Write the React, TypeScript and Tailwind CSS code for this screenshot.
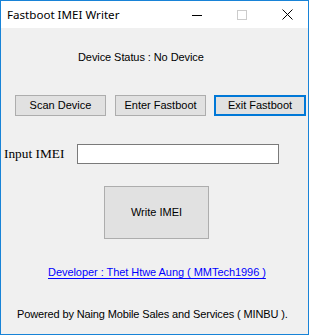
import React from "react";

const sans = { fontFamily: '"Liberation Sans", Arial, sans-serif' };

export default function App() {
  return (
    <div className="w-[310px] h-[336px] bg-white">
      <div className="w-[309px] h-[335px] border border-[#1883d7] flex flex-col bg-[#f0f0f0]">
        <div className="h-[27px] bg-white flex items-center shrink-0">
          <span
            className="ml-[6px] text-[11.6px] leading-[16px] text-black"
            style={{ fontFamily: '"Noto Sans", "Open Sans", sans-serif' }}
          >
            Fastboot IMEI Writer
          </span>
          <div className="ml-auto flex items-center">
            <svg width="10" height="10" viewBox="0 0 10 10" className="block">
              <line x1="0" y1="5.5" x2="10" y2="5.5" stroke="#000" strokeWidth="1" />
            </svg>
            <svg width="10" height="10" viewBox="0 0 10 10" className="block ml-[35px]">
              <rect x="0.5" y="0.5" width="9" height="9" fill="none" stroke="#cccccc" strokeWidth="1" />
            </svg>
            <svg width="11" height="11" viewBox="0 0 11 11" className="block ml-[35px] mr-[15px]">
              <path d="M0.5 0.5 L10.5 10.5 M10.5 0.5 L0.5 10.5" stroke="#000" strokeWidth="1" fill="none" />
            </svg>
          </div>
        </div>
        <div className="flex-1 flex flex-col text-black" style={sans}>
          <div className="mt-[23px] pl-[77px] text-[11px] leading-[13px] tracking-[-0.08px]">Device Status : No Device</div>
          <div className="mt-[31px] ml-[14px] flex items-center text-[11px]">
            <button className="w-[91px] h-[21px] bg-[#e1e1e1] border border-[#adadad] leading-[13px]" style={sans}>
              Scan Device
            </button>
            <button className="ml-[9px] w-[91px] h-[21px] bg-[#e1e1e1] border border-[#adadad] leading-[13px]" style={sans}>
              Enter Fastboot
            </button>
            <button className="ml-[8px] w-[92px] h-[21px] bg-[#e1e1e1] border-2 border-[#0078d7] leading-[13px]" style={sans}>
              Exit Fastboot
            </button>
          </div>
          <div className="mt-[28px] flex items-center">
            <span
              className="ml-[3px] text-[13.33px] leading-[16px] w-[73px]"
              style={{ fontFamily: '"Liberation Serif", "Times New Roman", serif' }}
            >
              Input IMEI
            </span>
            <div className="w-[202px] h-[20px] bg-white border border-[#7a7a7a]" />
          </div>
          <div className="mt-[22px] ml-[103px] w-[105px] h-[53px] bg-[#e1e1e1] border border-[#adadad] flex items-center justify-center text-[11px] leading-[13px]">
            Write IMEI
          </div>
          <div className="mt-[27px] pl-[47px] text-[11px] leading-[13px] tracking-[-0.05px]">
            <span className="text-[#0000ff] underline underline-offset-[2px]">Developer : Thet Htwe Aung ( MMTech1996 )</span>
          </div>
          <div className="mt-[29px] pl-[16px] text-[11px] leading-[13px] tracking-[-0.13px]">
            Powered by Naing Mobile Sales and Services ( MINBU ).
          </div>
        </div>
      </div>
    </div>
  );
}
